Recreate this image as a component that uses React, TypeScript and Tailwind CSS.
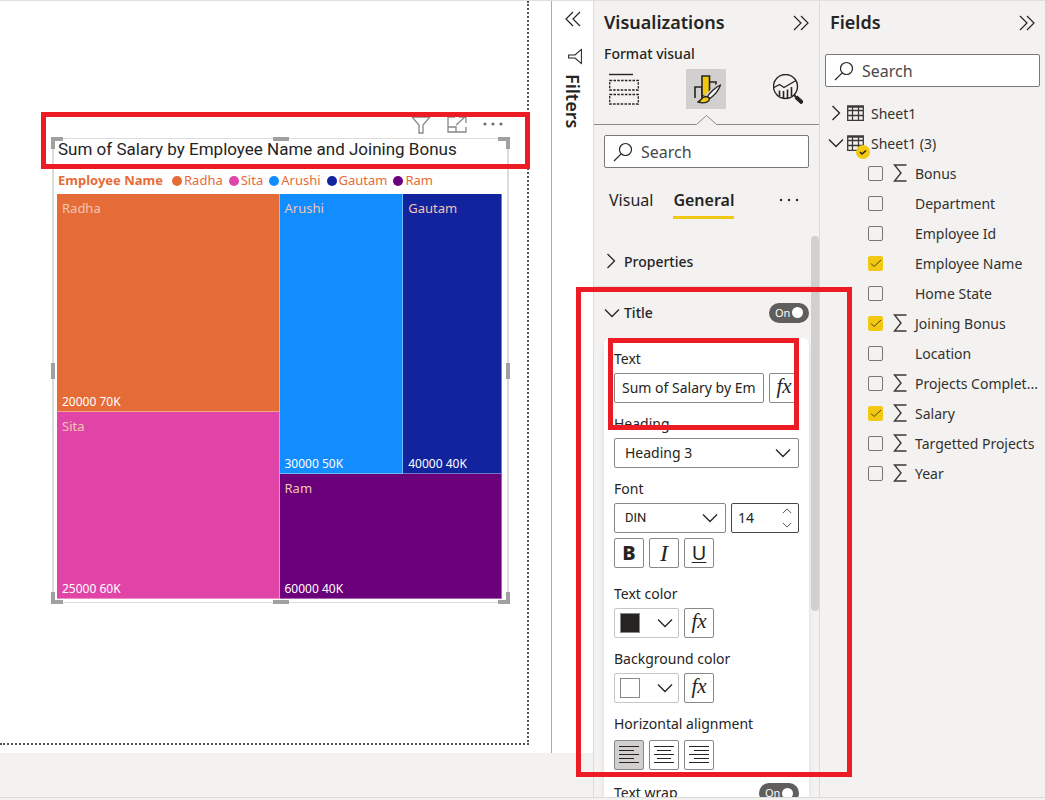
import { useState } from "react"
import type { ReactNode } from "react"
import clsx from "clsx"

interface Field {
  name: string
  numeric?: boolean
  checked?: boolean
}

const fields: Field[] = [
  { name: "Bonus", numeric: true },
  { name: "Department" },
  { name: "Employee Id" },
  { name: "Employee Name", checked: true },
  { name: "Home State" },
  { name: "Joining Bonus", numeric: true, checked: true },
  { name: "Location" },
  { name: "Projects Complet...", numeric: true },
  { name: "Salary", numeric: true, checked: true },
  { name: "Targetted Projects", numeric: true },
  { name: "Year", numeric: true },
]

const legend = [
  { name: "Radha", color: "bg-[#e66c37]" },
  { name: "Sita", color: "bg-[#e044a7]" },
  { name: "Arushi", color: "bg-[#118dff]" },
  { name: "Gautam", color: "bg-[#12239e]" },
  { name: "Ram", color: "bg-[#6b007b]" },
]

function Chevron({ className }: { className?: string }) {
  return (
    <svg viewBox="0 0 16 10" className={clsx("fill-none stroke-[#252423]", className)} aria-hidden="true">
      <path d="M1 1.5l7 7 7-7" strokeWidth="1.3" />
    </svg>
  )
}

function DoubleChevron({ flip }: { flip?: boolean }) {
  return (
    <svg viewBox="0 0 16 16" className={clsx("h-4 w-4 fill-none stroke-[#252423]", flip && "rotate-180")} aria-hidden="true">
      <path d="M1 1l7 7-7 7M8 1l7 7-7 7" strokeWidth="1.2" />
    </svg>
  )
}

function Funnel({ className }: { className?: string }) {
  return (
    <svg viewBox="0 0 20 18" className={clsx("fill-none", className)} aria-hidden="true">
      <path d="M1 1h18l-7 8v8H8V9z" strokeWidth="1.3" />
    </svg>
  )
}

function SearchBox({ label }: { label: string }) {
  return (
    <label className="flex h-[33px] items-center gap-2 rounded-xs border border-[#7a7876] bg-white px-2">
      <svg viewBox="0 0 20 20" className="h-5 w-5 shrink-0 fill-none stroke-[#252423]" aria-hidden="true">
        <circle cx="12.5" cy="7.5" r="6" strokeWidth="1.2" />
        <path d="M8.2 11.8L1 19" strokeWidth="1.2" />
      </svg>
      <input
        type="text"
        aria-label={label}
        placeholder="Search"
        className="w-full min-w-0 bg-transparent text-[16px] outline-none placeholder:text-[#494745]"
      />
    </label>
  )
}

function Tile({ name, value, className }: { name: string; value: string; className: string }) {
  return (
    <div className={clsx("flex min-h-0 min-w-0 flex-col justify-between border-r border-b border-white/40 px-[5px] pt-1 pb-px", className)}>
      <span className="text-[13px] leading-5 text-[#f0c5b4]">{name}</span>
      <span className="text-[12px] leading-4 text-white">{value}</span>
    </div>
  )
}

function ResizeHandles() {
  return (
    <>
      <span className="absolute -top-0.5 -left-[3px] h-3 w-3 border-t-4 border-l-4 border-[#a0a0a0]" />
      <span className="absolute -top-0.5 -right-[3px] h-3 w-3 border-t-4 border-r-4 border-[#a0a0a0]" />
      <span className="absolute -bottom-0.5 -left-[3px] h-3 w-3 border-b-4 border-l-4 border-[#a0a0a0]" />
      <span className="absolute -right-[3px] -bottom-0.5 h-3 w-3 border-r-4 border-b-4 border-[#a0a0a0]" />
      <span className="absolute -top-0.5 left-1/2 h-1 w-4 -translate-x-1/2 bg-[#a0a0a0]" />
      <span className="absolute -bottom-0.5 left-1/2 h-1 w-4 -translate-x-1/2 bg-[#a0a0a0]" />
      <span className="absolute top-1/2 -left-[3px] h-4 w-1 -translate-y-1/2 bg-[#a0a0a0]" />
      <span className="absolute top-1/2 -right-[3px] h-4 w-1 -translate-y-1/2 bg-[#a0a0a0]" />
    </>
  )
}

function TreemapVisual() {
  return (
    <section className="relative flex flex-1 flex-col">
      <div className="flex h-[22px] items-start justify-end gap-4 pr-1.5">
        <button type="button" aria-label="Filters on this visual">
          <Funnel className="h-[18px] w-5 stroke-[#8a8886]" />
        </button>
        <button type="button" aria-label="Focus mode">
          <svg viewBox="0 0 20 18" className="h-[18px] w-5 fill-none stroke-[#8a8886]" aria-hidden="true">
            <path d="M8 1H1v15h18v-5M1 11h8v5M9 9l9-8M12 1h7v6" strokeWidth="1.3" />
          </svg>
        </button>
        <button type="button" aria-label="More options">
          <svg viewBox="0 0 20 16" className="h-4 w-5 fill-[#6e6c6a]" aria-hidden="true">
            <circle cx="2" cy="8" r="1.6" />
            <circle cx="10" cy="8" r="1.6" />
            <circle cx="18" cy="8" r="1.6" />
          </svg>
        </button>
      </div>
      <div className="relative flex flex-1 flex-col border-x-2 border-y border-[#dcdcdc] pr-[5px] pb-[3px] pl-[3px]">
        <ResizeHandles />
        <h2 className="pl-px font-[Roboto,sans-serif] text-[17px] leading-5 whitespace-nowrap text-[#252423]">
          Sum of Salary by Employee Name and Joining Bonus
        </h2>
        <div className="flex h-[35px] items-center pt-2 pl-px text-[13px] whitespace-nowrap text-[#e66c37]">
          <span className="mr-[9px] font-bold">Employee Name</span>
          <ul className="flex gap-1.5">
            {legend.map((item) => (
              <li key={item.name} className="flex items-center gap-0.5">
                <span className={clsx("h-2.5 w-2.5 rounded-full", item.color)} />
                {item.name}
              </li>
            ))}
          </ul>
        </div>
        <div className="grid flex-1 grid-cols-2">
          <div className="grid grid-rows-[218fr_187fr]">
            <Tile name="Radha" value="20000 70K" className="bg-[#e66c37]" />
            <Tile name="Sita" value="25000 60K" className="bg-[#e044a7]" />
          </div>
          <div className="grid grid-rows-[280fr_125fr]">
            <div className="grid grid-cols-[124fr_99fr]">
              <Tile name="Arushi" value="30000 50K" className="bg-[#118dff]" />
              <Tile name="Gautam" value="40000 40K" className="bg-[#12239e]" />
            </div>
            <Tile name="Ram" value="60000 40K" className="bg-[#6b007b]" />
          </div>
        </div>
      </div>
      <div className="pointer-events-none absolute -top-1 -right-[21px] -left-[11px] z-10 h-[57px] border-[5px] border-[#ed1c24]" />
    </section>
  )
}

function Toggle({ label }: { label: string }) {
  const [on, setOn] = useState(true)

  return (
    <button
      type="button"
      role="switch"
      aria-checked={on}
      aria-label={label}
      onClick={() => setOn(!on)}
      className="flex h-5 w-10 items-center justify-between rounded-full bg-[#605e5c] px-1.5 text-[11px] leading-5 text-white"
    >
      {on ? "On" : "Off"}
      <span className="h-[11px] w-[11px] rounded-full bg-white" />
    </button>
  )
}

function SquareButton({ label, active, children }: { label: string; active?: boolean; children: ReactNode }) {
  return (
    <button
      type="button"
      aria-label={label}
      className={clsx(
        "flex h-[30px] w-[30px] shrink-0 items-center justify-center rounded-xs border border-[#8a8886]",
        active ? "bg-[#d2d0ce]" : "bg-white",
      )}
    >
      {children}
    </button>
  )
}

function FxButton({ label }: { label: string }) {
  return (
    <SquareButton label={label}>
      <span className="pb-1 font-['Liberation_Serif',serif] text-[21px] leading-6 italic">fx</span>
    </SquareButton>
  )
}

function SelectBox({ id, value, className }: { id: string; value: string; className: string }) {
  return (
    <div className={clsx("grid items-center", className)}>
      <select
        id={id}
        defaultValue={value}
        className="col-start-1 row-start-1 h-[30px] w-full appearance-none rounded-xs border border-[#8a8886] bg-white px-2.5"
      >
        <option>{value}</option>
      </select>
      <Chevron className="pointer-events-none col-start-1 row-start-1 mr-2 h-2.5 w-4 justify-self-end" />
    </div>
  )
}

function ColorPicker({ label, swatch }: { label: string; swatch: string }) {
  return (
    <div className="mt-1 flex gap-[5px]">
      <button
        type="button"
        aria-label={label}
        className="flex h-[30px] w-[65px] items-center justify-between rounded-xs border border-[#c8c6c4] bg-white px-[5px]"
      >
        <span className={clsx("h-5 w-5 border border-[#8a8886]", swatch)} />
        <Chevron className="h-2.5 w-4" />
      </button>
      <FxButton label={`${label} conditional formatting`} />
    </div>
  )
}

function AlignIcon({ d }: { d: string }) {
  return (
    <svg viewBox="0 0 20 20" className="h-5 w-5 stroke-[#252423]" shapeRendering="crispEdges" aria-hidden="true">
      <path d={d} strokeWidth="1" />
    </svg>
  )
}

function TitleSettings() {
  return (
    <div className="relative mr-[10px] ml-2.5 rounded-t-md bg-white px-2.5 pt-[11px] pb-4 text-[14px] leading-5 shadow-md">
      <label htmlFor="title-text" className="block">Text</label>
      <div className="mt-1 flex gap-[5px]">
        <div className="flex h-[30px] min-w-0 flex-1 rounded-xs border border-[#8a8886] bg-white px-[7px]">
          <input
            id="title-text"
            type="text"
            defaultValue="Sum of Salary by Employee Name and Joining Bonus"
            className="w-full min-w-0 outline-none"
          />
        </div>
        <FxButton label="Title text conditional formatting" />
      </div>

      <label htmlFor="heading" className="mt-[11px] block">Heading</label>
      <SelectBox id="heading" value="Heading 3" className="mt-1" />

      <label htmlFor="font" className="mt-[11px] block">Font</label>
      <div className="mt-1 flex gap-[5px]">
        <SelectBox id="font" value="DIN" className="flex-1 font-[Roboto,sans-serif] text-[13px]" />
        <div className="flex h-[30px] w-[68px] items-center rounded-xs border border-[#494745] pr-1.5 pl-1.5">
          <input type="text" aria-label="Font size" defaultValue="14" className="w-full min-w-0 outline-none" />
          <div className="flex flex-col gap-2">
            <button type="button" aria-label="Increase font size">
              <Chevron className="block h-1.5 w-2.5 rotate-180" />
            </button>
            <button type="button" aria-label="Decrease font size">
              <Chevron className="block h-1.5 w-2.5" />
            </button>
          </div>
        </div>
      </div>
      <div className="mt-[5px] flex gap-[5px]">
        <SquareButton label="Bold">
          <span className="text-[20px] font-extrabold">B</span>
        </SquareButton>
        <SquareButton label="Italic">
          <span className="font-['Liberation_Serif',serif] text-[24px] italic">I</span>
        </SquareButton>
        <SquareButton label="Underline">
          <span className="text-[20px] underline decoration-1 underline-offset-2">U</span>
        </SquareButton>
      </div>

      <p className="mt-4">Text color</p>
      <ColorPicker label="Text color" swatch="bg-[#252423]" />
      <p className="mt-[11px]">Background color</p>
      <ColorPicker label="Background color" swatch="bg-white" />

      <p className="mt-[11px]">Horizontal alignment</p>
      <div className="mt-1.5 flex gap-[5px]">
        <SquareButton label="Align left" active>
          <AlignIcon d="M0 1.5h20M0 5.5h15M0 9.5h20M0 13.5h15M0 17.5h20" />
        </SquareButton>
        <SquareButton label="Align center">
          <AlignIcon d="M0 1.5h20M3 5.5h14M0 9.5h20M3 13.5h14M0 17.5h20" />
        </SquareButton>
        <SquareButton label="Align right">
          <AlignIcon d="M0 1.5h20M5 5.5h15M0 9.5h20M5 13.5h15M0 17.5h20" />
        </SquareButton>
      </div>

      <div className="mt-[13px] flex items-center justify-between">
        <span>Text wrap</span>
        <Toggle label="Text wrap" />
      </div>
      <div className="pointer-events-none absolute top-0 right-2.5 left-1 h-[92px] border-[5px] border-[#ed1c24]" />
    </div>
  )
}

function VisualizationsPane() {
  return (
    <aside className="relative flex w-[227px] shrink-0 flex-col border-x border-[#dddbd9]">
      <header className="flex h-[43px] items-center justify-between px-2.5">
        <h2 className="text-[18px] font-semibold">Visualizations</h2>
        <button type="button" aria-label="Collapse visualizations">
          <DoubleChevron />
        </button>
      </header>
      <h3 className="pl-2.5 text-[14px] leading-5 font-medium">Format visual</h3>
      <div className="mt-1 flex h-[42px] items-center justify-between pr-4 pl-[15px]">
        <button type="button" aria-label="Build visual">
          <svg viewBox="0 0 30 32" className="h-8 w-[30px] fill-none stroke-[#252423]" aria-hidden="true">
            <path d="M0 1.5h24" strokeWidth="1.4" />
            <path d="M.7 7.5h28.600v9.500H.7zM.7 21.5h28.600v9.500H.7z" strokeDasharray="2.500 1.300" strokeWidth="1.3" />
          </svg>
        </button>
        <button type="button" aria-label="Format visual" className="flex h-10 w-10 items-center justify-center bg-[#d2d0ce]">
          <svg viewBox="0 0 30 30" className="h-[30px] w-[30px] fill-none stroke-[#252423]" aria-hidden="true">
            <path d="M4 24V13h7v11M18 8h7v3" strokeWidth="1.6" />
            <path d="M11 2h7.500v20H11z" className="fill-[#f2c811]" strokeWidth="1.6" />
            <path d="M28 12L14 25" className="stroke-[#d2d0ce]" strokeWidth="6" />
            <path d="M29.500 11c-4 1.500-10.500 7.500-13 11.500l2.500 2c4-3 9-9 10.500-13.500z" className="fill-[#f3f2f1]" strokeWidth="1.3" />
            <path d="M6.500 28c3.500-.5 3.500-5 8-5.500 3 0 5 2.500 3 4.500-2.500 2.500-7 2-11 1z" className="fill-[#f2c811]" strokeWidth="1.3" />
          </svg>
        </button>
        <button type="button" aria-label="Analytics">
          <svg viewBox="0 0 30 30" className="h-[30px] w-[30px] fill-none stroke-[#252423]" aria-hidden="true">
            <circle cx="12.500" cy="12.500" r="12" strokeWidth="1.4" />
            <path d="M1 13.500l5.500-3 4.500 3L23 6.500" strokeWidth="1.4" />
            <path d="M6.500 16.500v5.500M10.500 17v7M14.500 15.500V24M18.500 13v9" strokeWidth="1.6" />
            <path d="M21 21l3 3" strokeWidth="2" />
            <path d="M23 23l6.500 6" strokeWidth="4" />
          </svg>
        </button>
      </div>
      <svg viewBox="0 0 225 12" className="mt-1 block h-3 w-full fill-none stroke-[#8a8886]" aria-hidden="true">
        <path d="M0 10.500h102.500l10-9 10 9H225" strokeWidth="1" />
      </svg>
      <div className="mt-[9px] px-2.5">
        <SearchBox label="Search format options" />
      </div>
      <nav className="mt-4 flex items-start pr-5 pl-[15px] text-[16px] leading-8" role="tablist">
        <button type="button" role="tab" aria-selected="false">Visual</button>
        <button type="button" role="tab" aria-selected="true" className="ml-5 border-b-[3px] border-[#f2c811] font-semibold">
          General
        </button>
        <button type="button" aria-label="More options" className="ml-auto flex h-8 items-center">
          <svg viewBox="0 0 20 4" className="h-1 w-5 fill-[#252423]" aria-hidden="true">
            <circle cx="2" cy="2" r="1.200" />
            <circle cx="10" cy="2" r="1.200" />
            <circle cx="18" cy="2" r="1.200" />
          </svg>
        </button>
      </nav>
      <div className="mt-[17px] flex min-h-0 flex-1 overflow-hidden">
        <div className="-mr-2 min-w-0 flex-1">
          <button type="button" className="flex h-[51px] w-full items-center gap-1 border-b border-[#e1dfdd] pl-2 text-[14px] font-medium">
            <Chevron className="h-2.5 w-[18px] -rotate-90" />
            Properties
          </button>
          <div className="flex h-[51px] items-center justify-between px-2.5">
            <button type="button" aria-expanded="true" className="flex items-center gap-1 text-[14px] font-medium">
              <Chevron className="h-2.5 w-4" />
              Title
            </button>
            <Toggle label="Title" />
          </div>
          <TitleSettings />
        </div>
        <div className="z-10 h-[375px] w-2 shrink-0 rounded-full bg-[#d2d0ce]" />
      </div>
      <div className="pointer-events-none absolute top-[286px] -right-[33px] -left-[18px] z-10 h-[490px] border-[5px] border-[#ed1c24]" />
    </aside>
  )
}

function TableIcon() {
  return (
    <svg viewBox="0 0 17 16" className="h-4 w-[17px] fill-none stroke-[#3b3a39]" aria-hidden="true">
      <path d="M.7 1h15.600v14.300H.7zM.7 2h15.600M.7 5.500h15.600M.7 10.500h15.600M5.500 2v13.500M11.500 2v13.500" strokeWidth="1.300" />
    </svg>
  )
}

function FieldRow({ field }: { field: Field }) {
  return (
    <li>
      <label className="flex h-[30px] items-center pl-12">
        <span className="grid h-[15px] w-[15px] shrink-0 place-items-center">
          <input
            type="checkbox"
            defaultChecked={field.checked}
            className="peer col-start-1 row-start-1 h-[15px] w-[15px] appearance-none rounded-xs border border-[#797775] checked:border-[#f2c811] checked:bg-[#f2c811]"
          />
          <svg
            viewBox="0 0 12 9"
            className="pointer-events-none invisible col-start-1 row-start-1 h-[9px] w-3 fill-none stroke-[#4a430f] peer-checked:visible"
            aria-hidden="true"
          >
            <path d="M1 4.500l3 3 7-6.500" />
          </svg>
        </span>
        <span className="ml-2.5 w-[22px] shrink-0">
          {field.numeric && (
            <svg viewBox="0 0 14 18" className="h-[18px] w-3.5 fill-none stroke-[#3b3a39]" aria-hidden="true">
              <path d="M13.500 1H1.500l6.500 8-6.500 8h12" strokeWidth="1.400" />
            </svg>
          )}
        </span>
        <span className="whitespace-nowrap">{field.name}</span>
      </label>
    </li>
  )
}

function FieldsPane() {
  return (
    <aside className="flex w-[225px] shrink-0 flex-col">
      <header className="flex h-[43px] items-center justify-between px-2.5">
        <h2 className="text-[18px] font-semibold">Fields</h2>
        <button type="button" aria-label="Collapse fields">
          <DoubleChevron />
        </button>
      </header>
      <div className="mt-2.5 px-[5px]">
        <SearchBox label="Search fields" />
      </div>
      <div className="mt-[11px] text-[14px] text-[#323130]">
        <button type="button" className="flex h-[30px] items-center gap-[3px] pl-2">
          <Chevron className="h-2.5 w-4 -rotate-90" />
          <TableIcon />
          <span className="ml-1">Sheet1</span>
        </button>
        <button type="button" aria-expanded="true" className="flex h-[30px] items-center gap-[3px] pl-2">
          <Chevron className="h-2.5 w-4" />
          <span className="relative">
            <TableIcon />
            <svg viewBox="0 0 14 14" className="absolute -right-1.5 -bottom-2 h-3.5 w-3.5" aria-hidden="true">
              <circle cx="7" cy="7" r="7" className="fill-[#f2c811]" />
              <path d="M4 7l2 2 4-3.500" className="fill-none stroke-[#252423]" strokeWidth="1.600" />
            </svg>
          </span>
          <span className="ml-1">Sheet1 (3)</span>
        </button>
        <ul>
          {fields.map((field) => (
            <FieldRow key={field.name} field={field} />
          ))}
        </ul>
      </div>
    </aside>
  )
}

export default function App() {
  return (
    <div className="flex h-screen min-h-[640px] flex-col overflow-hidden border-t border-[#e1dfdd] bg-[#f3f2f1] font-['Noto_Sans',sans-serif] text-[#252423]">
      <div className="flex min-h-0 flex-1 border-b border-[#dddbd9]">
        <main className="flex min-w-0 flex-1 flex-col pb-11">
          <div className="flex min-h-0 flex-1 bg-white">
            <div className="flex min-w-0 flex-1 border-r border-[#aaa] pr-[22px] pb-2">
              <div className="flex min-w-0 flex-1 border-r-2 border-b-2 border-dotted border-[#555] pt-[115px] pr-[18px] pb-[140px] pl-[52px]">
                <TreemapVisual />
              </div>
            </div>
            <div className="flex w-[41px] shrink-0 flex-col items-center pt-2.5">
              <button type="button" aria-label="Expand filters">
                <DoubleChevron flip />
              </button>
              <Funnel className="mt-[22px] ml-1 h-[15px] w-4 rotate-90 stroke-[#252423]" />
              <h2 className="mt-2.5 text-[18px] leading-5 font-semibold [writing-mode:vertical-rl]">Filters</h2>
            </div>
          </div>
        </main>
        <VisualizationsPane />
        <FieldsPane />
      </div>
      <div className="h-0.5 shrink-0" />
    </div>
  )
}
